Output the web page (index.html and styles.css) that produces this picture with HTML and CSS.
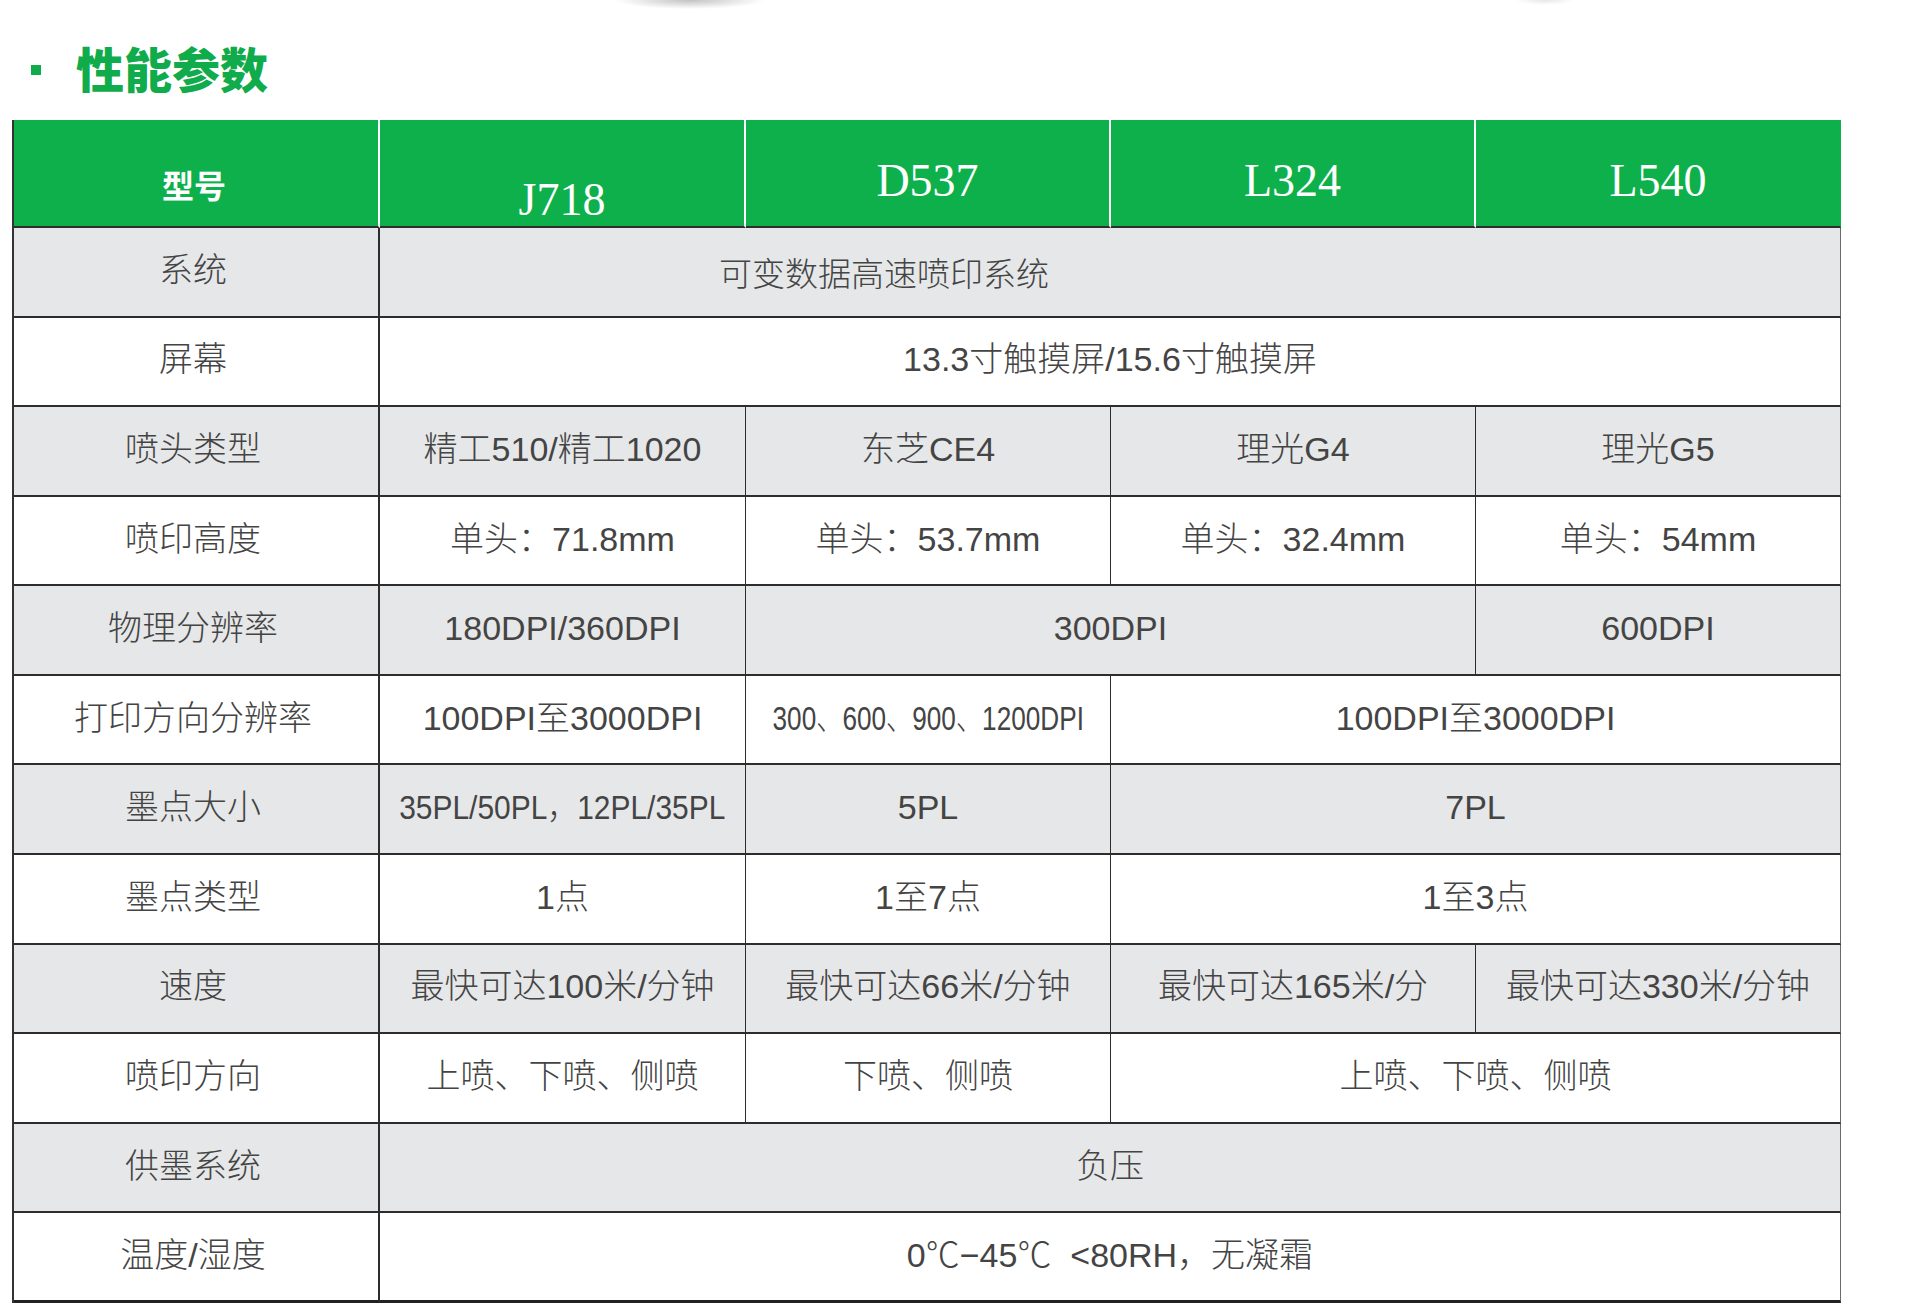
FILE: index.html
```html
<!DOCTYPE html>
<html lang="zh-CN">
<head>
<meta charset="utf-8">
<title>性能参数</title>
<link rel="stylesheet" href="styles.css">
</head>
<body>
<div class="page">
  <h1 class="title"><span class="title-dot"></span><span class="title-text">性能参数</span></h1>
  <div class="spec">
    <div class="hd hd-label">型号</div>
    <div class="hd hd-model hd-low">J718</div>
    <div class="hd hd-model">D537</div>
    <div class="hd hd-model">L324</div>
    <div class="hd hd-model hd-last">L540</div>

    <div class="c lab g">系统</div>
    <div class="c g last span4 song shift">可变数据高速喷印系统</div>

    <div class="c lab">屏幕</div>
    <div class="c last span4">13.3寸触摸屏/15.6寸触摸屏</div>

    <div class="c lab g">喷头类型</div>
    <div class="c g">精工510/精工1020</div>
    <div class="c g">东芝CE4</div>
    <div class="c g">理光G4</div>
    <div class="c g last">理光G5</div>

    <div class="c lab">喷印高度</div>
    <div class="c">单头：71.8mm</div>
    <div class="c">单头：53.7mm</div>
    <div class="c">单头：32.4mm</div>
    <div class="c last">单头：54mm</div>

    <div class="c lab g">物理分辨率</div>
    <div class="c g">180DPI/360DPI</div>
    <div class="c g span2">300DPI</div>
    <div class="c g last">600DPI</div>

    <div class="c lab">打印方向分辨率</div>
    <div class="c">100DPI至3000DPI</div>
    <div class="c"><span class="narrow">300、600、900、1200DPI</span></div>
    <div class="c last span2">100DPI至3000DPI</div>

    <div class="c lab g">墨点大小</div>
    <div class="c g"><span class="narrow2">35PL/50PL，12PL/35PL</span></div>
    <div class="c g">5PL</div>
    <div class="c g last span2">7PL</div>

    <div class="c lab">墨点类型</div>
    <div class="c">1点</div>
    <div class="c">1至7点</div>
    <div class="c last span2">1至3点</div>

    <div class="c lab g">速度</div>
    <div class="c g">最快可达100米/分钟</div>
    <div class="c g">最快可达66米/分钟</div>
    <div class="c g">最快可达165米/分</div>
    <div class="c g last">最快可达330米/分钟</div>

    <div class="c lab">喷印方向</div>
    <div class="c">上喷、下喷、侧喷</div>
    <div class="c">下喷、侧喷</div>
    <div class="c last span2">上喷、下喷、侧喷</div>

    <div class="c lab g">供墨系统</div>
    <div class="c g last span4">负压</div>

    <div class="c lab bottom">温度/湿度</div>
    <div class="c last span4 bottom">0℃−45℃&nbsp;&nbsp;&lt;80RH，无凝霜</div>
  </div>
</div>
</body>
</html>
```

FILE: styles.css
```css
* {
  box-sizing: border-box;
}

html, body {
  margin: 0;
  padding: 0;
}

body {
  width: 1920px;
  height: 1304px;
  overflow: hidden;
  background-color: #ffffff;
  background-image:
    radial-gradient(ellipse 75px 9px at 690px 0px, rgba(80, 80, 80, 0.35), rgba(255, 255, 255, 0)),
    radial-gradient(ellipse 30px 5px at 1545px 0px, rgba(120, 120, 120, 0.18), rgba(255, 255, 255, 0));
  background-repeat: no-repeat;
  font-family: "Liberation Sans", "Noto Sans CJK SC", sans-serif;
  color: #444444;
}

.page {
  padding: 43px 0 0 12px;
}

.title {
  margin: 0 0 29px 0;
  height: 48px;
  display: flex;
  align-items: center;
  font-family: "Noto Sans CJK SC", sans-serif;
  font-weight: 900;
  font-size: 48px;
  line-height: 48px;
  color: #10ab4b;
}

.title-dot {
  width: 10px;
  height: 10px;
  background: #10ab4b;
  margin: 6px 35px 0 19px;
  flex: none;
}

.spec {
  display: grid;
  width: 1827px;
  grid-template-columns: 366px 366px 365px 365px 365px;
  grid-template-rows: 108px repeat(12, 89.58px);
  border-left: 2px solid #333333;
}

.hd {
  background: #0db04b;
  color: #ffffff;
  border-right: 2px solid #ffffff;
  border-bottom: 2px solid #2d2d2d;
  display: flex;
  justify-content: center;
  align-items: flex-start;
}

.hd-label {
  font-family: "Noto Sans CJK SC", sans-serif;
  font-weight: 700;
  font-size: 32px;
  line-height: 32px;
  padding-top: 48px;
  padding-right: 4px;
}

.hd-model {
  font-family: "Liberation Serif", serif;
  font-size: 46px;
  line-height: 46px;
  padding-top: 38px;
}

.hd-low {
  padding-top: 57px;
}

.hd-last {
  border-right: 1px solid #0db04b;
}

.c {
  display: flex;
  align-items: center;
  justify-content: center;
  background: #ffffff;
  border-right: 1px solid #2d2d2d;
  border-bottom: 2px solid #2d2d2d;
  font-size: 34px;
  font-weight: 300;
  line-height: 40px;
  white-space: nowrap;
  padding-bottom: 4px;
}

.c.g {
  background: #e6e7e8;
}

.c.lab {
  border-right: 2px solid #2d2d2d;
  padding-right: 6px;
}

.c.last {
  border-right: 1px solid #6a6a6a;
}

.c.bottom {
  border-bottom: 3px solid #222222;
}

.span2 {
  grid-column: span 2;
}

.span4 {
  grid-column: span 4;
}

.song {
  font-size: 33px;
  padding-top: 10px;
}

.shift {
  padding-right: 452px;
}

.narrow {
  display: inline-block;
  transform: scaleX(0.77);
}

.narrow2 {
  display: inline-block;
  transform: scaleX(0.88);
}
```
